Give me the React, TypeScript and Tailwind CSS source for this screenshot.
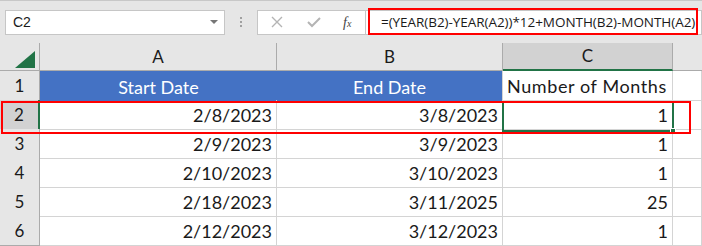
import React from "react";

const rows = [
  { n: 2, a: "2/8/2023", b: "3/8/2023", c: "1" },
  { n: 3, a: "2/9/2023", b: "3/9/2023", c: "1" },
  { n: 4, a: "2/10/2023", b: "3/10/2023", c: "1" },
  { n: 5, a: "2/18/2023", b: "3/11/2025", c: "25" },
  { n: 6, a: "2/12/2023", b: "3/12/2023", c: "1" },
];

const cols = "grid grid-cols-[40px_237px_226px_170px_1fr]";

export default function App() {
  return (
    <div className="relative w-[702px] h-[246px] overflow-hidden bg-white font-['Lato','Open_Sans',sans-serif] text-[#1a1a1a] border-t border-[#c8c8c8]">
      {/* formula bar */}
      <div className="flex items-center h-[42px] bg-[#e6e6e6] pl-[5px]">
        <div className="flex items-center justify-between w-[220px] h-[25px] bg-white border border-[#c6c6c6] pl-[7px] pr-[6px]">
          <span className="text-[14px] font-['Liberation_Sans',sans-serif]">C2</span>
          <span className="w-0 h-0 border-l-[4px] border-r-[4px] border-t-[4px] border-l-transparent border-r-transparent border-t-[#767676]" />
        </div>
        <div className="flex flex-col gap-[2px] w-[32px] items-center">
          <span className="w-[2px] h-[2px] bg-[#a0a0a0]" />
          <span className="w-[2px] h-[2px] bg-[#a0a0a0]" />
          <span className="w-[2px] h-[2px] bg-[#a0a0a0]" />
        </div>
        <div className="flex items-center h-[25px] bg-white border border-[#c6c6c6] flex-1">
          <div className="flex items-center w-[108px] h-full border-r border-[#c6c6c6]">
            <svg width="14" height="14" viewBox="0 0 14 14" className="ml-[12px]">
              <path d="M2 2 L12 12 M12 2 L2 12" stroke="#b4b4b4" strokeWidth="1.4" />
            </svg>
            <svg width="16" height="14" viewBox="0 0 16 14" className="ml-[22px]">
              <path d="M2 7 L6 11 L14 3" stroke="#b4b4b4" strokeWidth="2" fill="none" />
            </svg>
            <span className="ml-[21px] text-[14px] italic font-['Liberation_Serif',serif] text-[#444]">
              f<span className="text-[10px]">x</span>
            </span>
          </div>
          <span className="ml-[15px] text-[13.5px] tracking-[-0.05px] font-['Open_Sans',sans-serif] whitespace-nowrap">
            =(YEAR(B2)-YEAR(A2))*12+MONTH(B2)-MONTH(A2)
          </span>
        </div>
      </div>

      {/* column headers */}
      <div className={`${cols} h-[28px] bg-[#e6e6e6] text-[17px]`}>
        <div className="relative border-r border-b border-[#ababab]">
          <svg width="21" height="17" viewBox="0 0 21 17" className="absolute left-[15px] top-[8px]">
            <path d="M20 0 L20 17 L0 17 Z" fill="#217346" />
          </svg>
        </div>
        <div className="flex items-center justify-center border-r border-b border-[#ababab]">A</div>
        <div className="flex items-center justify-center border-r border-b border-[#ababab]">B</div>
        <div className="flex items-center justify-center bg-[#d2d2d2] border-r border-[#ababab] border-b-2 border-b-[#217346]">C</div>
        <div className="border-b border-[#ababab]" />
      </div>

      {/* row 1 */}
      <div className={`${cols} h-[29px] text-[18px]`}>
        <div className="flex items-center justify-center bg-[#e6e6e6] border-r border-b border-[#ababab] text-[17px]">1</div>
        <div className="flex items-center justify-center pt-[2px] bg-[#4472c4] text-white">Start Date</div>
        <div className="flex items-center justify-center pt-[2px] bg-[#4472c4] text-white border-r border-[#d4d4d4]">End Date</div>
        <div className="flex items-center pl-[4px] pt-[2px] tracking-[0.6px] border-r border-b border-[#d4d4d4] whitespace-nowrap">Number of Months</div>
        <div className="border-r border-b border-[#d4d4d4]" />
      </div>

      {rows.map((r) => (
        <div key={r.n} className={`${cols} h-[29px] text-[18px]`}>
          <div
            className={`flex items-center justify-center border-b border-[#ababab] text-[17px] ${
              r.n === 2 ? "bg-[#d2d2d2] border-r-2 border-r-[#217346]" : "bg-[#e6e6e6] border-r border-r-[#ababab]"
            }`}
          >
            {r.n}
          </div>
          <div className="flex items-center justify-end pr-[4px] pt-[2px] border-r border-b border-[#d4d4d4]">{r.a}</div>
          <div className="flex items-center justify-end pr-[4px] pt-[2px] border-r border-b border-[#d4d4d4]">{r.b}</div>
          <div className="flex items-center justify-end pr-[4px] pt-[2px] border-r border-b border-[#d4d4d4]">{r.c}</div>
          <div className="border-r border-b border-[#d4d4d4]" />
        </div>
      ))}

      {/* selection on C2 */}
      <div className="absolute left-[502px] top-[100px] w-[172px] h-[31px] border-2 border-[#217346]" />
      <div className="absolute left-[670px] top-[127px] w-[6px] h-[6px] bg-[#217346] border border-white" />

      {/* red highlight boxes */}
      <div className="absolute left-[368px] top-[7px] w-[330px] h-[27px] border-2 border-[#ff0000]" />
      <div className="absolute left-[1px] top-[100px] w-[690px] h-[33px] border-2 border-[#ff0000]" />
    </div>
  );
}
